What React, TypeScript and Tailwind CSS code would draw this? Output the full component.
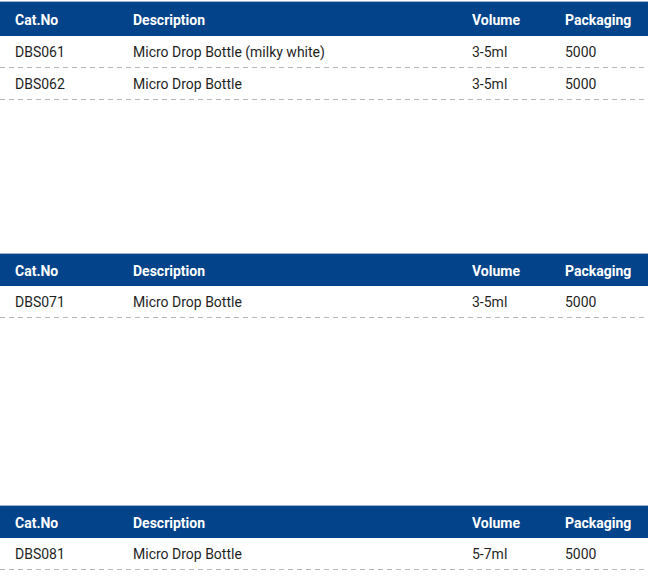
const tables = [
  {
    rows: [
      { cat: "DBS061", desc: "Micro Drop Bottle (milky white)", vol: "3-5ml", pack: "5000" },
      { cat: "DBS062", desc: "Micro Drop Bottle", vol: "3-5ml", pack: "5000" },
    ],
  },
  {
    rows: [{ cat: "DBS071", desc: "Micro Drop Bottle", vol: "3-5ml", pack: "5000" }],
  },
  {
    rows: [{ cat: "DBS081", desc: "Micro Drop Bottle", vol: "5-7ml", pack: "5000" }],
  },
];

type Row = (typeof tables)[number]["rows"][number];

const Dashed = () => (
  <div className="h-px w-full bg-[repeating-linear-gradient(to_right,#b8b8b8_0_5px,transparent_5px_9px)]" />
);

const ProductTable = ({ rows, tall }: { rows: Row[]; tall?: boolean }) => (
  <div className="w-[648px]">
    <div
      className={`flex items-center border-t border-[#9db5d3] bg-[#02438a] pt-[3px] text-[14px] font-bold text-white ${
        tall ? "h-[35px]" : "h-[33px]"
      }`}
    >
      <div className="w-[133px] pl-[15px]">Cat.No</div>
      <div className="w-[339px]">Description</div>
      <div className="w-[93px]">Volume</div>
      <div>Packaging</div>
    </div>
    {rows.map((r) => (
      <div key={r.cat}>
        <div className="flex h-[31px] items-center pt-px text-[14px] text-[#1f1f1f]">
          <div className="w-[133px] pl-[15px]">{r.cat}</div>
          <div className="w-[339px]">{r.desc}</div>
          <div className="w-[93px]">{r.vol}</div>
          <div>{r.pack}</div>
        </div>
        <Dashed />
      </div>
    ))}
  </div>
);

export default function App() {
  return (
    <div className="h-[583px] w-[660px] bg-white pt-px font-['Roboto',sans-serif]">
      <div className="h-[252px]">
        <ProductTable rows={tables[0].rows} tall />
      </div>
      <div className="h-[252px]">
        <ProductTable rows={tables[1].rows} />
      </div>
      <ProductTable rows={tables[2].rows} />
    </div>
  );
}
